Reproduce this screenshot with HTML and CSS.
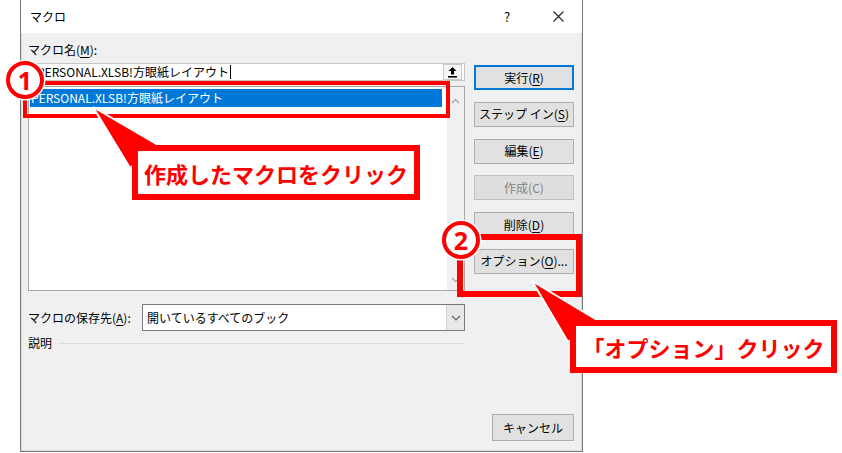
FILE: index.html
```html
<!DOCTYPE html>
<html lang="ja">
<head>
<meta charset="utf-8">
<title>マクロ</title>
<link rel="stylesheet" href="styles.css">
</head>
<body>
<div class="page">
  <div class="dialog">
    <div class="titlebar">
      <span class="title">マクロ</span>
      <span class="help">?</span>
      <span class="close"><svg width="11" height="11" viewBox="0 0 11 11"><path d="M0.5 0.5 L10.5 10.5 M10.5 0.5 L0.5 10.5" stroke="#222" stroke-width="1.1" fill="none"/></svg></span>
    </div>
    <div class="content">
      <div class="left">
        <div class="lbl first">マクロ名(<u>M</u>):</div>
        <div class="namebox">
          <span class="nametext">PERSONAL.XLSB!方眼紙レイアウト</span><span class="caret"></span>
          <span class="refbtn"><svg width="11" height="12" viewBox="0 0 11 12"><path d="M5.5 1 L1.5 5 H4 V8.5 H7 V5 H9.5 Z" fill="#000"/><rect x="1" y="10" width="9" height="1.6" fill="#000"/></svg></span>
        </div>
        <div class="list">
          <div class="items">
            <div class="item sel">PERSONAL.XLSB!方眼紙レイアウト</div>
          </div>
          <div class="vscroll">
            <svg width="9" height="6" viewBox="0 0 9 6"><path d="M1 5 L4.5 1.5 L8 5" stroke="#a0a0a0" stroke-width="1.1" fill="none"/></svg>
            <svg width="9" height="6" viewBox="0 0 9 6"><path d="M1 1 L4.5 4.5 L8 1" stroke="#a0a0a0" stroke-width="1.1" fill="none"/></svg>
          </div>
        </div>
        <div class="saverow">
          <span class="lbl savelbl">マクロの保存先(<u>A</u>):</span>
          <div class="select">
            <span class="seltext">開いているすべてのブック</span>
            <span class="selbtn"><svg width="10" height="6" viewBox="0 0 10 6"><path d="M1 1 L5 5 L9 1" stroke="#606060" stroke-width="1.1" fill="none"/></svg></span>
          </div>
        </div>
        <div class="desc"><span>説明</span><span class="rule"></span></div>
      </div>
      <div class="right">
        <button class="btn default">実行(<u>R</u>)</button>
        <button class="btn">ステップ イン(<u>S</u>)</button>
        <button class="btn">編集(<u>E</u>)</button>
        <button class="btn disabled">作成(C)</button>
        <button class="btn">削除(<u>D</u>)</button>
        <button class="btn">オプション(<u>O</u>)...</button>
        <button class="btn cancel">キャンセル</button>
      </div>
    </div>
  </div>

  <div class="hl hl1"></div>
  <div class="hl hl2"></div>
  <svg class="pointers" width="842" height="453" viewBox="0 0 842 453">
    <polygon points="93,107 130,168 158,145" fill="#ff0000" stroke="#ffffff" stroke-width="2" stroke-linejoin="miter"/>
    <polygon points="532,281 568,342 597,320" fill="#ff0000" stroke="#ffffff" stroke-width="2" stroke-linejoin="miter"/>
  </svg>
  <div class="callout c1">作成したマクロをクリック</div>
  <div class="callout c2">「オプション」クリック</div>
  <div class="num num1">1</div>
  <div class="num num2">2</div>
</div>
</body>
</html>
```

FILE: styles.css
```css
* { box-sizing: border-box; }
html, body { margin: 0; padding: 0; background: #ffffff; }
body {
  font-family: "Noto Sans CJK JP", "Noto Sans", sans-serif;
  font-size: 12px;
  color: #000;
}
u { text-underline-offset: 2px; }
.page {
  position: relative;
  width: 842px;
  height: 453px;
  padding-left: 20px;
  overflow: hidden;
}
.dialog {
  width: 563px;
  height: 452px;
  border: 1px solid #7a7a7a;
  border-top: none;
  background: #f0f0f0;
  display: flex;
  flex-direction: column;
  box-shadow: inset 1px 0 0 #dadada, inset -1px 0 0 #dadada, inset 0 -1px 0 #dadada;
}
.titlebar {
  height: 33px;
  background: #ffffff;
  display: flex;
  align-items: center;
  padding-left: 9px;
  padding-right: 18px;
}
.title { flex: 1; line-height: 16px; }
.help { width: 10px; text-align: center; margin-right: 41px; font-size: 13px; }
.close { width: 11px; height: 11px; display: flex; }
.content {
  flex: 1;
  display: flex;
  gap: 9px;
  padding: 0 8px 10px 7px;
}
.left {
  width: 437px;
  display: flex;
  flex-direction: column;
}
.lbl { line-height: 16px; white-space: nowrap; }
.lbl.first { margin-top: 9px; }
.namebox {
  margin-top: 5px;
  height: 18px;
  background: #ffffff;
  border: 1px solid #c6c6c6;
  display: flex;
  align-items: center;
  padding-left: 8px;
}
.nametext { line-height: 16px; white-space: nowrap; }
.caret { width: 1px; height: 14px; background: #000; margin-left: 1px; }
.refbtn {
  margin-left: auto;
  margin-right: 2px;
  width: 19px;
  height: 16px;
  border: 1px solid #c9c9c9;
  background: #f7f7f7;
  display: flex;
  align-items: center;
  justify-content: center;
}
.list {
  margin-top: 5px;
  height: 205px;
  border: 1px solid #a8a8a8;
  background: #ffffff;
  display: flex;
}
.items { flex: 1; padding: 2px 5px 2px 1px; }
.item { height: 18px; line-height: 18px; white-space: nowrap; padding-left: 1px; }
.item.sel { background: #0078d7; color: #ffffff; }
.vscroll {
  width: 17px;
  background: #f0f0f0;
  display: flex;
  flex-direction: column;
  align-items: center;
  justify-content: space-between;
  padding: 11px 0 7px;
}
.saverow {
  margin-top: 13px;
  height: 27px;
  display: flex;
  align-items: center;
}
.savelbl { width: 114px; }
.select {
  flex: 1;
  height: 27px;
  border: 1px solid #7a7a7a;
  background: #ffffff;
  display: flex;
  align-items: center;
  padding-left: 4px;
}
.seltext { line-height: 16px; }
.selbtn {
  margin-left: auto;
  width: 18px;
  height: 25px;
  background: #e8e8e8;
  border-left: 1px solid #cfcfcf;
  display: flex;
  align-items: center;
  justify-content: center;
}
.desc {
  margin-top: 4px;
  height: 16px;
  display: flex;
  align-items: center;
  gap: 6px;
  line-height: 16px;
}
.rule { flex: 1; height: 1px; background: #dcdcdc; }
.right {
  width: 100px;
  display: flex;
  flex-direction: column;
  padding-top: 32px;
  gap: 11.8px;
}
.btn {
  height: 25px;
  border: 1px solid #adadad;
  background: #e1e1e1;
  font-family: inherit;
  font-size: 12px;
  color: #000;
  padding: 0;
  line-height: 16px;
  white-space: nowrap;
}
.btn.default { border-color: #0078d7; box-shadow: inset 0 0 0 1px #0078d7; }
.btn.disabled { color: #838383; border-color: #bfbfbf; background: #dedede; }
.btn.cancel {
  margin-top: auto;
  width: 82px;
  height: 27px;
  align-self: flex-end;
}
.hl {
  position: absolute;
  border: 5px solid #ff0000;
}
.hl1 { left: 23px; top: 81px; width: 427px; height: 37px; border-width: 4px; }
.hl2 { left: 457px; top: 234px; width: 125px; height: 63px; border-width: 6px; }
.pointers { position: absolute; left: 0; top: 0; }
.callout {
  position: absolute;
  border: 6px solid #ff0000;
  background: #ffffff;
  color: #ff0000;
  font-weight: 700;
  font-size: 22px;
  display: flex;
  align-items: center;
  justify-content: center;
  white-space: nowrap;
}
.c1 { left: 132px; top: 145px; width: 288px; height: 55px; }
.c2 { left: 570px; top: 320px; width: 267px; height: 53px; }
.num {
  position: absolute;
  width: 38px;
  height: 38px;
  border-radius: 50%;
  border: 4px solid #ff0000;
  background: #ffffff;
  color: #ff0000;
  font-family: "Noto Sans", sans-serif;
  font-weight: 700;
  font-size: 25px;
  line-height: 1;
  display: flex;
  align-items: center;
  justify-content: center;
  box-shadow: 0 0 0 1.5px #ffffff;
}
.num1 { left: 6px; top: 61px; }
.num2 { left: 442px; top: 221px; }
```
